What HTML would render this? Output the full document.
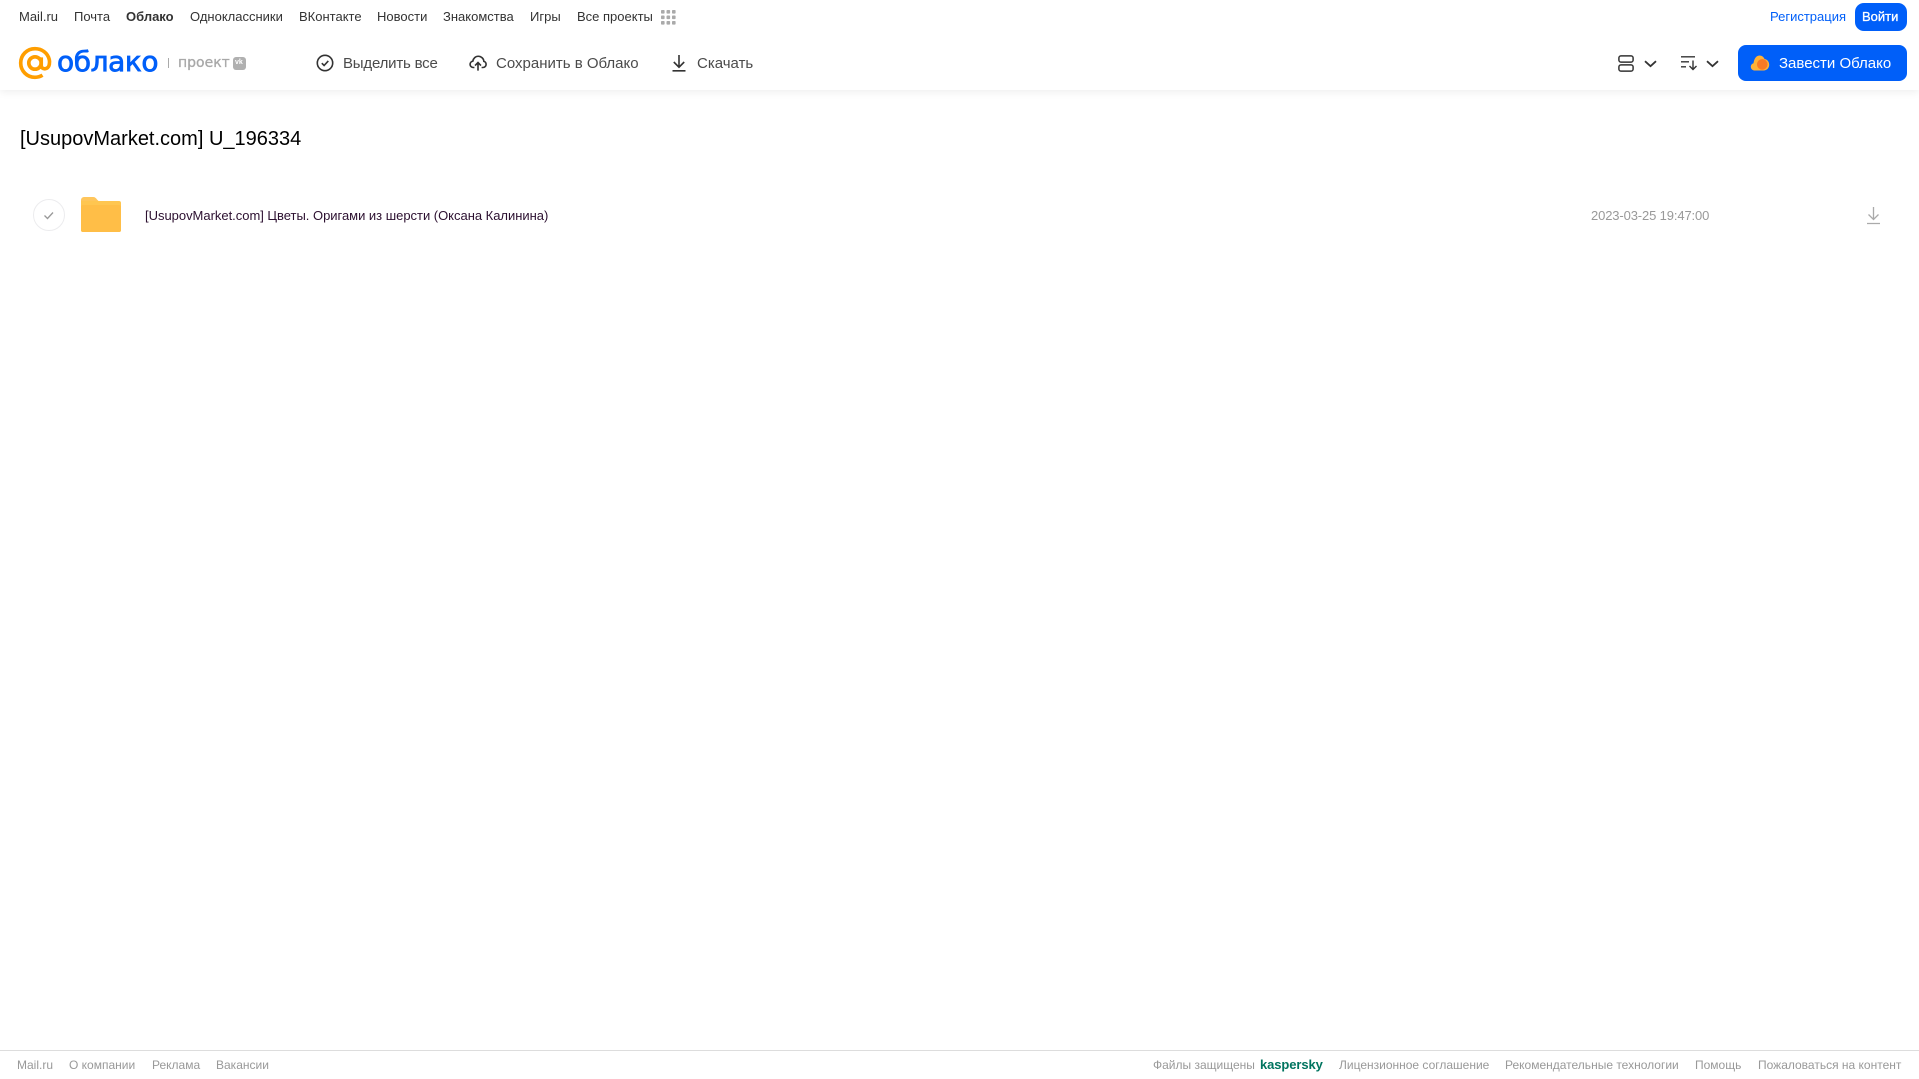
<!DOCTYPE html>
<html lang="ru"><head><meta charset="utf-8"><title>Облако</title>
<style>
html,body{margin:0;padding:0;background:#fff;width:1919px;height:1079px;overflow:hidden}
body{position:relative;font-family:"Liberation Sans",sans-serif}
.t{position:absolute;white-space:nowrap;line-height:20px;height:20px}
.n{top:7px;font-size:13px;color:#333}
.a{top:54px;font-size:15px;color:#4b4b4b;letter-spacing:0}
.f{top:1055px;font-size:12px;color:#999}
svg{position:absolute;overflow:visible}
#hd{position:absolute;left:0;top:0;width:1919px;height:90px;background:#fff;box-shadow:0 2px 8px rgba(0,0,0,.07)}
</style></head><body>
<div id="hd"></div>
<span class="t n" style="left:19px">Mail.ru</span>
<span class="t n" style="left:74px">Почта</span>
<span class="t n" style="left:126px;font-weight:700">Облако</span>
<span class="t n" style="left:190px">Одноклассники</span>
<span class="t n" style="left:299px">ВКонтакте</span>
<span class="t n" style="left:377px">Новости</span>
<span class="t n" style="left:443px">Знакомства</span>
<span class="t n" style="left:530px">Игры</span>
<span class="t n" style="left:577px">Все проекты</span>
<svg style="left:661px;top:10px" width="15" height="15" fill="#aaa"><rect x="0" y="0" width="3.6" height="3.6" rx=".8"/><rect x="5.5" y="0" width="3.6" height="3.6" rx=".8"/><rect x="11" y="0" width="3.6" height="3.6" rx=".8"/><rect x="0" y="5.5" width="3.6" height="3.6" rx=".8"/><rect x="5.5" y="5.5" width="3.6" height="3.6" rx=".8"/><rect x="11" y="5.5" width="3.6" height="3.6" rx=".8"/><rect x="0" y="11" width="3.6" height="3.6" rx=".8"/><rect x="5.5" y="11" width="3.6" height="3.6" rx=".8"/><rect x="11" y="11" width="3.6" height="3.6" rx=".8"/></svg>
<span class="t n" style="left:1770px;color:#005ff9">Регистрация</span>
<div style="position:absolute;left:1855px;top:3px;width:52px;height:28px;background:#005ff9;border-radius:9px"></div>
<span class="t n" style="left:1862px;color:#fff;font-size:13px;-webkit-text-stroke:.3px #fff">Войти</span>

<svg style="left:19px;top:47px" width="32" height="32" viewBox="0 0 34 34" fill="none" stroke="#ff9e00" stroke-width="3.900"><circle cx="17" cy="17" r="6.600"/><path d="M23.600 11v8.500c0 5 7.600 5 8.600-1 .4-2.500.4-3.500 0-5C30.500 6 24 1.800 17 1.800 8.500 1.800 1.800 8.500 1.800 17S8.500 32.200 17 32.200c3 0 5.500-.7 8-2.200"/></svg>
<span class="t" style="left:57px;top:44px;height:36px;line-height:36px;font-family:'DejaVu Sans',sans-serif;font-size:28px;color:#005ff9;-webkit-text-stroke:.8px #005ff9;letter-spacing:-.4px">облако</span>
<div style="position:absolute;left:168px;top:58px;width:1px;height:10px;background:#aaa"></div>
<span class="t" style="left:178px;top:53px;font-family:'DejaVu Sans',sans-serif;font-size:14px;color:#a8a8a8;-webkit-text-stroke:.3px #a8a8a8">проект</span>
<div style="position:absolute;left:233px;top:57px;width:13px;height:13px;border-radius:3px;background:#b0b0b0"></div>
<span class="t" style="left:235px;top:53px;font-size:7px;font-weight:700;color:#fff">vk</span>

<svg style="left:316px;top:54px" width="18" height="18" fill="none" stroke="#333" stroke-width="1.600"><circle cx="9" cy="9" r="7.700"/><path d="M5.800 9.200l2.300 2.300 4.200-4.600"/></svg>
<span class="t a" style="left:343px;letter-spacing:-.2px">Выделить все</span>
<svg style="left:469px;top:54px" width="18" height="18" viewBox="0 0 20 19" fill="none" stroke="#333" stroke-width="1.800"><path d="M6 14.500H4.800C2.800 14.500 1.200 13 1.200 11c0-1.800 1.300-3.200 3-3.500C4.800 4.300 7.300 2 10.300 2c3.300 0 6 2.500 6.200 5.700 1.500.4 2.500 1.700 2.500 3.300 0 1.900-1.500 3.500-3.500 3.500H14"/><path d="M10 18V9M6.700 12.300L10 9l3.300 3.300"/></svg>
<span class="t a" style="left:496px">Сохранить в Облако</span>
<svg style="left:671px;top:54px" width="16" height="18" fill="none" stroke="#333" stroke-width="1.600"><path d="M8 1v12M2.800 8L8 13.200 13.200 8M1.500 16.800h13"/></svg>
<span class="t a" style="left:697px">Скачать</span>

<svg style="left:1618px;top:55px" width="16" height="17" fill="none" stroke="#333" stroke-width="1.500"><rect x=".9" y=".9" width="14.200" height="6.200" rx="2"/><rect x=".9" y="9.900" width="14.200" height="6.200" rx="2"/></svg>
<svg style="left:1644px;top:60px" width="13" height="8" fill="none" stroke="#333" stroke-width="1.800"><path d="M1 1.200l5.500 5 5.500-5"/></svg>
<svg style="left:1681px;top:55px" width="17" height="16" fill="none" stroke="#333" stroke-width="1.400"><path d="M0 1.800h14M0 6.800h8M0 11.800h5M12 5.500v9M8.500 11l3.500 3.500 3.500-3.500"/></svg>
<svg style="left:1706px;top:60px" width="13" height="8" fill="none" stroke="#333" stroke-width="1.800"><path d="M1 1.200l5.500 5 5.500-5"/></svg>
<div style="position:absolute;left:1738px;top:45px;width:169px;height:36px;background:#005ff9;border-radius:8px"></div>
<svg style="left:1750px;top:54px" width="20" height="18"><path d="M5 16.500C2.500 16.500.8 14.800.8 12.700c0-1.800 1.200-3.100 2.700-3.500C4 6 5.500 1.500 9.500 1.500c2.500 0 4.200 1.500 5 3.500 2.800.4 4.700 2.800 4.700 5.800 0 3.300-2.500 5.700-5.500 5.700z" fill="#ffb238"/><circle cx="12.300" cy="10.400" r="5.300" fill="#f97a26"/></svg>
<span class="t a" style="left:1779px;color:#fff">Завести Облако</span>

<span class="t" id="title" style="left:20px;top:125px;height:28px;line-height:28px;font-size:20px;color:#000">[UsupovMarket.com] U_196334</span>

<svg style="left:33px;top:199px" width="32" height="32" fill="none"><circle cx="16" cy="16" r="15.500" stroke="#ececee"/><path d="M11.500 16.500l3 3 5.500-6" stroke="#999" stroke-width="1.300"/></svg>
<svg style="left:81px;top:197px" width="41" height="36"><path d="M0 3a3 3 0 0 1 3-3h9c2 0 3 1 4 2.500L18 4.500h-18z" fill="#ffc65c"/><path d="M2 4h36a2 2 0 0 1 2 2v27a2 2 0 0 1-2 2H2a2 2 0 0 1-2-2V4z" fill="#ffc650"/><rect x="0" y="8" width="40" height="27" rx="2" fill="#ffbe47"/></svg>
<span class="t" style="left:145px;top:206px;font-size:13px;color:#2c1030;letter-spacing:-.02px">[UsupovMarket.com] Цветы. Оригами из шерсти (Оксана Калинина)</span>
<span class="t" style="left:1591px;top:206px;font-size:13px;color:#999;letter-spacing:-.13px">2023-03-25 19:47:00</span>
<svg style="left:1866px;top:207px" width="15" height="18" fill="none" stroke="#aaa" stroke-width="1.300"><path d="M7.500 0v12.500M2.500 7.500l5 5 5-5M1 16.500h13"/></svg>

<div style="position:absolute;left:0;top:1050px;width:1919px;height:1px;background:#ddd"></div>
<span class="t f" style="left:17px">Mail.ru</span>
<span class="t f" style="left:69px">О компании</span>
<span class="t f" style="left:152px">Реклама</span>
<span class="t f" style="left:216px">Вакансии</span>
<span class="t f" style="left:1153px">Файлы защищены</span>
<span class="t f" style="left:1260px;color:#00745f;font-weight:700;font-size:13px;letter-spacing:-.1px">kaspersky</span>
<span class="t f" style="left:1339px">Лицензионное соглашение</span>
<span class="t f" style="left:1505px">Рекомендательные технологии</span>
<span class="t f" style="left:1695px">Помощь</span>
<span class="t f" style="left:1758px">Пожаловаться на контент</span>
</body></html>
